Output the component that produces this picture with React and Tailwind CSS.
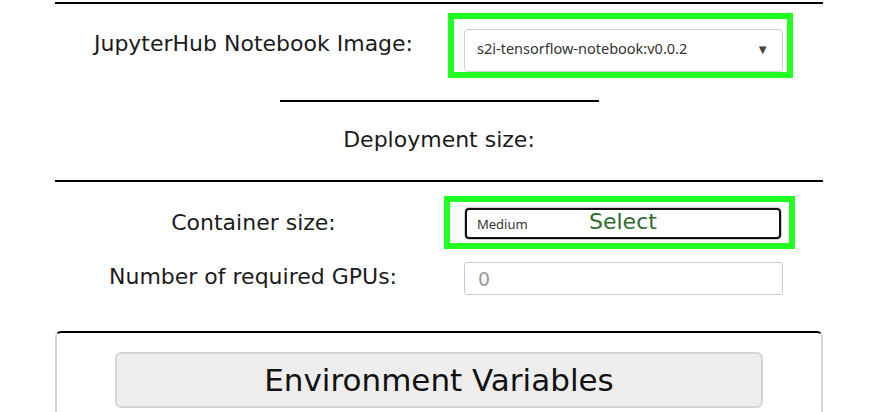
import { useState } from 'react';

const LABEL = "text-[22px] text-[#1b1b1b] font-['DejaVu_Sans',sans-serif]";

function GreenFrame({ className, children }) {
  return <div className={`border-[6px] border-[#22ff22] ${className}`}>{children}</div>;
}

export default function App() {
  const [image, setImage] = useState('s2i-tensorflow-notebook:v0.0.2');
  const [size, setSize] = useState('Medium');
  const [gpus, setGpus] = useState('');

  return (
    <div className="w-[896px] h-[412px] overflow-hidden bg-white">
      <div className="ml-[55px] mt-[2px] w-[768px] border-t-2 border-black">
        {/* Notebook image */}
        <div className="flex items-center pt-[9px]">
          <div className={`w-[393px] pl-[4px] pb-[4px] text-center ${LABEL}`}>JupyterHub Notebook Image:</div>
          <GreenFrame className="w-[345px] h-[65px] pl-[10px] pr-[4px] pt-[10px]">
            <div className="relative h-[43px] w-[319px] rounded-[4px] border border-[#d0d0d0] bg-white">
              <select value={image} onChange={e => setImage(e.target.value)}
                className="h-full w-full appearance-none bg-transparent pl-[12px] pb-[4px] text-[14.5px] text-[#333] font-['Noto_Sans',sans-serif] outline-none">
                <option>s2i-tensorflow-notebook:v0.0.2</option>
                <option>s2i-minimal-notebook:3.6</option>
              </select>
              <span className="pointer-events-none absolute right-[13px] top-[10px] text-[13px] text-[#444]">▼</span>
            </div>
          </GreenFrame>
        </div>

        <div className="mx-auto mt-[22px] w-[319px] border-t-2 border-black" />

        <div className={`h-[78px] pb-[4px] flex items-center justify-center ${LABEL}`}>Deployment size:</div>

        {/* Container size */}
        <div className="border-t-2 border-black pt-[14px]">
          <div className="flex items-center">
            <div className={`w-[389px] pl-[8px] text-center ${LABEL}`}>Container size:</div>
            <GreenFrame className="w-[351px] h-[53px] pl-[15px] pt-[6px]">
              <div className="relative h-[31px] w-[316px] rounded-[4px] border-2 border-[#111] shadow-[0_0_0_1px_#cfcfcf]">
                <select value={size} onChange={e => setSize(e.target.value)}
                  className="h-full w-full appearance-none bg-transparent pl-[10px] pt-[3px] text-[13px] text-[#333] font-['Noto_Sans',sans-serif] outline-none">
                  <option>Small</option>
                  <option>Medium</option>
                  <option>Large</option>
                </select>
                <span className="pointer-events-none absolute left-[122px] top-[-5px] text-[22px] text-[#2f6b2f] font-['DejaVu_Sans',sans-serif]">Select</span>
              </div>
            </GreenFrame>
          </div>

          {/* GPUs */}
          <div className="mt-[13px] flex items-center">
            <div className={`w-[396px] leading-[28px] pb-[4px] text-center ${LABEL}`}>Number of required GPUs:</div>
            <input value={gpus} onChange={e => setGpus(e.target.value)} placeholder="0"
              className="ml-[13px] h-[33px] w-[319px] rounded-[3px] border border-[#cccccc] pl-[13px] text-[19px] text-[#333] placeholder:text-[#9a9a9a] font-['DejaVu_Sans',sans-serif] outline-none" />
          </div>
        </div>

        {/* Environment variables */}
        <div className="mt-[36px] h-[120px] rounded-t-[6px] border-t-2 border-x-2 border-t-black border-x-[#d6d6d6] pt-[19px]">
          <button className="ml-[58px] h-[56px] w-[648px] rounded-[6px] border-2 border-[#d4d4d4] bg-[#ededed] text-[31px] text-[#111] font-['DejaVu_Sans',sans-serif]">
            Environment Variables
          </button>
        </div>
      </div>
    </div>
  );
}
